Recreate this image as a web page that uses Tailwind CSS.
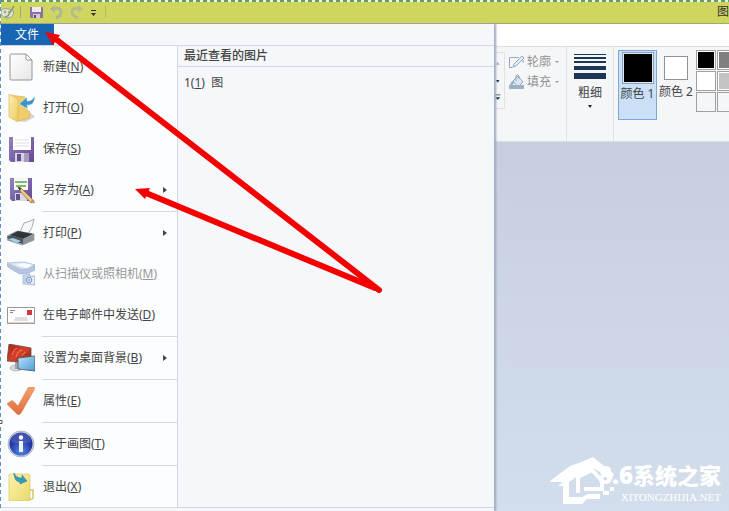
<!DOCTYPE html>
<html lang="zh-CN">
<head>
    <meta charset="UTF-8">
    <meta name="viewport" content="width=device-width, initial-scale=1.0">
    <title>画图</title>
    <script src="https://cdn.jsdelivr.net/npm/@tailwindcss/browser@4"></script>
</head>
<body class="font-['Noto_Sans','Noto_Sans_CJK_SC',sans-serif] text-xs text-[#444]">

    <div class="relative flex min-h-screen flex-col overflow-hidden bg-[#f5f7fa]">

        <!-- Title bar -->
        <header class="flex h-6 items-center border-b border-[#a5a86c] bg-[#cfd65f]">
            <svg class="h-4 w-4" viewBox="0 0 16 16" fill="none">
                <path d="M1 8C1 5 5 4 9 5l4 2c2 2-1 7-5 7-5 0-7-3-7-6z" fill="#dfe4ca" stroke="#96a18b"/>
                <circle cx="5" cy="8" r="1.2" fill="#7fa4ae"/>
                <circle cx="9" cy="8" r="1.2" fill="#b7a184"/>
                <path d="M14 2L8 12l-3 1" stroke="#8d987f" stroke-width="1.5"/>
            </svg>
            <span class="ml-1 h-3 w-px bg-[#a5a96a]"></span>
            <button class="ml-2" aria-label="保存">
                <svg class="h-4 w-4" viewBox="0 0 16 16">
                    <path d="M1 3h13v11H2l-1-1z" fill="#8a74a0"/>
                    <path d="M3 3h9v5H3z" fill="#f1e9f4"/>
                    <path d="M4 10h7v4H4z" fill="#d3c9df"/>
                    <path d="M5 11h2v3H5z" fill="#594774"/>
                </svg>
            </button>
            <button class="ml-1" aria-label="撤消">
                <svg class="h-4 w-4" viewBox="0 0 16 16" fill="none">
                    <path d="M4 5c5-2 8 0 8 3 0 3-2 5-5 6" stroke="#b0b597" stroke-width="3"/>
                    <path d="M6 1v8L1 5z" fill="#b0b597"/>
                </svg>
            </button>
            <button class="ml-1" aria-label="重做">
                <svg class="h-4 w-4" viewBox="0 0 16 16" fill="none">
                    <path d="M11 5C6 3 3 5 3 8c0 3 3 5 6 6" stroke="#b6bc8c" stroke-width="3"/>
                    <path d="M9 1v8l5-4z" fill="#b6bc8c"/>
                </svg>
            </button>
            <button aria-label="自定义快速访问工具栏">
                <svg class="h-4 w-4" viewBox="0 0 16 16" fill="#333">
                    <path d="M6 6h5v1H6zM6 9h5l-2.500 3z"/>
                </svg>
            </button>
            <span class="ml-1 h-3 w-px bg-[#b5b96c]"></span>
            <h1 class="ml-auto text-xs whitespace-nowrap text-[#333]">图</h1>
        </header>

        <div class="flex grow">

            <!-- File menu -->
            <div class="z-10 flex w-[495px] shrink-0 flex-col border-r border-[#aab2c8] bg-[#f5f7fa] shadow-[1px_0_2px_#9aa3bd]">
                <div class="flex h-[21px] items-stretch">
                    <button class="w-[54px] bg-[#1765b3] text-white">文件</button>
                </div>
                <div class="flex border-y border-[#d5d8e0]">
                    <nav class="flex w-[178px] shrink-0 flex-col border-r border-[#d5d8e0] bg-[#fbfdfe]">
                        <button class="flex h-[41px] items-center pl-[7px]">
                            <svg class="mr-2 h-7 w-7" viewBox="0 0 28 28">
                                <defs>
                                    <linearGradient id="paper" x2="1" y2="1"><stop stop-color="#fff"/><stop offset="1" stop-color="#e6e6e6"/></linearGradient>
                                    <linearGradient id="folder" x2="1" y2="1"><stop stop-color="#fcf0b2"/><stop offset="1" stop-color="#edca62"/></linearGradient>
                                    <linearGradient id="note" x2="1" y2="1"><stop stop-color="#fcf3ae"/><stop offset="1" stop-color="#ecd869"/></linearGradient>
                                    <linearGradient id="disk" x2="1" y2="1"><stop stop-color="#9183bd"/><stop offset="1" stop-color="#67479b"/></linearGradient>
                                    <radialGradient id="info" cy=".8"><stop stop-color="#568ce6"/><stop offset="1" stop-color="#2036a2"/></radialGradient>
                                    <linearGradient id="check" x2="0" y2="1"><stop stop-color="#f3a06c"/><stop offset="1" stop-color="#e36c3e"/></linearGradient>
                                    <linearGradient id="screen" x2="1" y2="1"><stop stop-color="#bfe1f8"/><stop offset="1" stop-color="#489bd7"/></linearGradient>
                                    <linearGradient id="wallpaper" x2="1" y2="1"><stop stop-color="#9d2418"/><stop offset=".5" stop-color="#d8402a"/><stop offset="1" stop-color="#8a1f14"/></linearGradient>
                                </defs>
                                <path d="M4 1h15l6 6v19q0 1-1 1H4q-1 0-1-1V2q0-1 1-1z" fill="url(#paper)" stroke="#969696"/>
                                <path d="M19 1v5q0 1 1 1h5z" fill="#fff" stroke="#969696"/>
                            </svg>
                            <span>新建(<u>N</u>)</span>
                        </button>
                        <button class="flex h-[41px] items-center pl-[7px]">
                            <svg class="mr-2 h-7 w-7" viewBox="0 0 28 28">
                                <path d="M10 27l14-8 4 4-10 5z" fill="#d4d4d0"/>
                                <path d="M3 1l15 2v11l5 4-1 6-11 3z" fill="#f0cd66" stroke="#d9b356" stroke-width=".7"/>
                                <path d="M2 0l9 5v23l-9-5z" fill="url(#folder)" stroke="#dbb75c" stroke-width=".7"/>
                                <path d="M28 2c0 7-4 10-8 9l1 4-9-5 8-7v4c4 0 6-2 8-5z" fill="#3b94cd" stroke="#fff" stroke-width=".5"/>
                            </svg>
                            <span>打开(<u>O</u>)</span>
                        </button>
                        <button class="flex h-[41px] items-center pl-[7px]">
                            <svg class="mr-2 h-7 w-7" viewBox="0 0 28 28">
                                <path d="M2 2h24q1 0 1 1v24H4l-2-2z" fill="url(#disk)"/>
                                <path d="M6 1h18v14H6z" fill="#fff"/>
                                <path d="M8 5h14M8 8h14M8 11h14" stroke="#dedee7"/>
                                <path d="M8 18h14v9H8z" fill="#d5d3dd"/>
                                <path d="M10 19h4v7h-4z" fill="#674c93"/>
                                <path d="M17 18h5v9h-5z" fill="#a79cbe"/>
                            </svg>
                            <span>保存(<u>S</u>)</span>
                        </button>
                        <button class="flex h-[41px] items-center pl-[7px]">
                            <svg class="mr-2 h-7 w-7" viewBox="0 0 28 28">
                                <path d="M3 2h22v23H5l-2-2z" fill="url(#disk)"/>
                                <path d="M7 2h14v12H7z" fill="#f5f8f3"/>
                                <path d="M8 6h12M9 10h10" stroke="#7fbb72" stroke-width="2"/>
                                <path d="M8 17h12v8H8z" fill="#dad8e2"/>
                                <path d="M9 18h4v6H9z" fill="#63508d"/>
                                <path d="M11 11l3 1 13 13-3 2-11-12z" fill="#edc882" stroke="#8f713e" stroke-width=".8"/>
                                <path d="M11 11l3 1-1 3z" fill="#333"/>
                                <path d="M25 23l3 3q0 2-3 1l-1-2z" fill="#ce8d66"/>
                            </svg>
                            <span class="grow text-left">另存为(<u>A</u>)</span>
                            <svg class="mr-2.5 h-2 w-1" viewBox="0 0 4 8"><path d="M0 1v6l4-3z" fill="#444"/></svg>
                        </button>
                        <div class="mt-px ml-[42px] h-px bg-[#d5d8e0]"></div>
                        <button class="flex h-[41px] items-center pl-[7px]">
                            <svg class="mr-2 h-7 w-7" viewBox="0 0 28 28">
                                <path d="M13 13l4-9q5-1 10-4-1 9-6 15z" fill="#f7f8fb" stroke="#93969d" stroke-width=".8"/>
                                <path d="M0 17l10-5 17 3v6l-12 5-15-5z" fill="#b8bdc4" stroke="#777c83" stroke-width=".6"/>
                                <path d="M3 16l8-4 15 3-10 5z" fill="#32363c"/>
                                <path d="M0 18l4-2 12 4v5l-14-4z" fill="#4e5359"/>
                                <path d="M1 20l5-1 8 3-4 2z" fill="#9dd0e7"/>
                                <path d="M16 20l11-5v6l-11 5z" fill="#8e949b"/>
                            </svg>
                            <span class="grow text-left">打印(<u>P</u>)</span>
                            <svg class="mr-2.5 h-2 w-1" viewBox="0 0 4 8"><path d="M0 1v6l4-3z" fill="#444"/></svg>
                        </button>
                        <button class="flex h-[41px] items-center pl-[7px] text-[#999]" disabled>
                            <svg class="mr-2 h-7 w-7" viewBox="0 0 28 28">
                                <path d="M0 3q10-1 17-1l11 3-6 5q-6 0-8-1Z" fill="#dce5f3" stroke="#a3b6d6" stroke-width=".7"/>
                                <path d="M0 4l14 6q8 0 14-5v5q-6 4-15 4Q7 11 1 7z" fill="#b6c6e1" stroke="#9bafd2" stroke-width=".7"/>
                                <path d="M8 5l9-2 8 2-5 3z" fill="#f8fbff"/>
                                <path d="M16 15h3v-1h4v2h5v9l-12-1z" fill="#c3d1e8" stroke="#a2b4d5" stroke-width=".7"/>
                                <path d="M19 17h8v7l-8-1z" fill="#e5edf8"/>
                                <circle cx="22" cy="20" r="2.800" fill="#d5e0f1" stroke="#7f96c2"/>
                                <circle cx="22" cy="20" r="1" fill="#91a7cf"/>
                            </svg>
                            <span>从扫描仪或照相机(<u>M</u>)</span>
                        </button>
                        <button class="flex h-[41px] items-center pl-[7px]">
                            <svg class="mr-2 h-7 w-7" viewBox="0 0 28 28">
                                <path d="M.5 6.500h27v16H.5z" fill="#fff" stroke="#96989d"/>
                                <path d="M1 22h26" stroke="#bd9c89"/>
                                <path d="M3 9.500h5M3 11.500h3" stroke="#888"/>
                                <path d="M20 9h5v5h-5z" fill="#d23a3a"/>
                                <path d="M8 17h12M7 19h14" stroke="#bcbcc5"/>
                            </svg>
                            <span>在电子邮件中发送(<u>D</u>)</span>
                        </button>
                        <div class="mt-px ml-[42px] h-px bg-[#d5d8e0]"></div>
                        <button class="flex h-[41px] items-center pl-[7px]">
                            <svg class="mr-2 h-7 w-7" viewBox="0 0 28 28">
                                <ellipse cx="9" cy="24" rx="6" ry="3" fill="#d4d7db" stroke="#989ca2" stroke-width=".6"/>
                                <path d="M8 18h5l-1 7H8z" fill="#a5a9ae"/>
                                <path d="M2 0l22 4v15L0 17z" fill="url(#wallpaper)" stroke="#6c4a43" stroke-width=".8"/>
                                <path d="M5 11q2-6 5-7M9 13q2-7 6-7M15 12q1-3 4-4" stroke="#ef8355" fill="none"/>
                                <path d="M11 14l17-2v15l-17-2z" fill="url(#screen)" stroke="#45545f" stroke-width=".8"/>
                            </svg>
                            <span class="grow text-left">设置为桌面背景(<u>B</u>)</span>
                            <svg class="mr-2.5 h-2 w-1" viewBox="0 0 4 8"><path d="M0 1v6l4-3z" fill="#444"/></svg>
                        </button>
                        <div class="mt-px ml-[42px] h-px bg-[#d5d8e0]"></div>
                        <button class="flex h-[41px] items-center pl-[7px]">
                            <svg class="mr-2 h-7 w-7" viewBox="0 0 28 28">
                                <path d="M0 17l4-3q2-1 3 1l4 4L21 1q1-1 3-1h3q1 1 0 3L14 26q-2 3-4 1z" fill="url(#check)" stroke="#d97a50" stroke-width=".6"/>
                            </svg>
                            <span>属性(<u>E</u>)</span>
                        </button>
                        <div class="mt-px ml-[42px] h-px bg-[#d5d8e0]"></div>
                        <button class="flex h-[41px] items-center pl-[7px]">
                            <svg class="mr-2 h-7 w-7" viewBox="0 0 28 28">
                                <circle cx="14" cy="14" r="13" fill="#cad1df" stroke="#8c96b0" stroke-width=".6"/>
                                <circle cx="14" cy="14" r="11.500" fill="url(#info)"/>
                                <path d="M4 12a10 10 0 0 1 20 0q-10 3-20 0z" fill="#fff" opacity=".15"/>
                                <circle cx="14" cy="7.500" r="2.200" fill="#fff"/>
                                <path d="M12 11h4v11h-4z" fill="#eef2fc"/>
                            </svg>
                            <span>关于画图(<u>T</u>)</span>
                        </button>
                        <div class="mt-px ml-[42px] h-px bg-[#d5d8e0]"></div>
                        <button class="flex h-[41px] items-center pl-[7px]">
                            <svg class="mr-2 h-7 w-7" viewBox="0 0 28 28">
                                <path d="M2 2l2-1h18l1 1v25l-1 1H2z" fill="url(#note)" stroke="#d8c462" stroke-width=".7"/>
                                <path d="M23 17h3v8q-1 2-3 1" fill="none" stroke="#d8c462" stroke-width="1.500"/>
                                <path d="M7 0c1 3 4 5 8 5V2l5 6-7 3V9C9 9 7 5 7 0z" fill="#339abb" stroke="#277992" stroke-width=".5"/>
                            </svg>
                            <span>退出(<u>X</u>)</span>
                        </button>
                    </nav>
                    <section class="flex grow flex-col">
                        <h2 class="flex h-[21px] items-center border-b border-[#d5d8e0] pl-1.5 font-medium">最近查看的图片</h2>
                        <a href="#" class="mt-2 pl-1.5">1(<u>1</u>)&nbsp; 图</a>
                    </section>
                </div>
            </div>

            <!-- Ribbon and canvas -->
            <div class="flex min-w-0 grow flex-col">
                <div class="h-[22px] shrink-0 bg-white"></div>
                <div class="flex h-[96px] shrink-0 overflow-hidden border-y border-[#dcdee2] bg-[#f5f6f7]">
                    <div class="flex w-[72px] shrink-0 items-start border-r border-[#e0e2e5] pt-[5px]">
                        <svg class="h-[57px] w-2.5 shrink-0 border border-l-0 border-[#dfe2e8]" viewBox="0 0 10 57" fill="#1e3250">
                            <path d="M1 11h4L3 8z" fill="#a0a6b0"/>
                            <path d="M1 28h4l-2 3zM0 44h6v1H0zM0 47h6l-3 3z"/>
                        </svg>
                        <div class="ml-1 flex flex-col text-[#929292]">
                            <button class="flex h-5 items-center whitespace-nowrap" disabled>
                                <svg class="mr-0.5 h-4 w-4" viewBox="0 0 16 16" fill="none" stroke="#91a9c4">
                                    <path d="M10 3.500H.5v10h3M14 6v3"/>
                                    <path d="M5 10l8-8 2 2-8 8-3 1z" fill="#e3edf5"/>
                                </svg>
                                轮廓
                                <svg class="ml-1 h-1 w-1" viewBox="0 0 4 4"><path d="M0 1h4L2 3z" fill="#999"/></svg>
                            </button>
                            <button class="flex h-5 items-center whitespace-nowrap" disabled>
                                <svg class="mr-0.5 h-4 w-4" viewBox="0 0 16 16">
                                    <path d="M4 7l5-5 5 6-5 5z" fill="#dbe8f2" stroke="#8da5bf"/>
                                    <path d="M4 7q-3 1-3 6 3-1 4-5z" fill="#8eabc7"/>
                                    <path d="M7 7V2q1-3 3 0v3" fill="none" stroke="#8da5bf"/>
                                    <path d="M0 11h15v4H0z" fill="#9db1c6"/>
                                </svg>
                                填充
                                <svg class="ml-1 h-1 w-1" viewBox="0 0 4 4"><path d="M0 1h4L2 3z" fill="#999"/></svg>
                            </button>
                        </div>
                    </div>
                    <button class="flex w-[47px] shrink-0 flex-col items-center border-r border-[#e0e2e5] pt-1.5">
                        <svg class="h-7 w-8" viewBox="0 0 32 28" fill="#1e3656">
                            <path d="M0 1h32v1H0zM0 4h32v2H0zM0 8h32v2H0zM0 13h32v4H0zM0 20h32v6H0z"/>
                        </svg>
                        <span class="mt-1">粗细</span>
                        <svg class="mt-1 h-1 w-1" viewBox="0 0 4 4"><path d="M0 0h4L2 3z" fill="#222"/></svg>
                    </button>
                    <div class="flex shrink-0 items-start pt-[3px] pl-1">
                        <button class="flex h-[70px] w-[39px] flex-col items-center border border-[#7fa9d4] bg-[#c9e0f7] pt-px whitespace-nowrap">
                            <span class="h-8 w-8 border-2 border-[#8fa3b8] bg-black outline-1 -outline-offset-2 outline-[#dbe7f2]"></span>
                            <span class="mt-0.5">颜色 1</span>
                        </button>
                        <button class="flex h-[70px] w-[38px] flex-col items-center pt-1.5 whitespace-nowrap">
                            <span class="h-6 w-6 border border-[#909498] bg-white"></span>
                            <span class="mt-1">颜色 2</span>
                        </button>
                        <div class="ml-px grid grid-cols-2 gap-x-px gap-y-px">
                            <button class="h-5 w-5 border border-[#a0a0a0] bg-black inset-ring inset-ring-white" aria-label="黑色"></button>
                            <button class="h-5 w-5 border border-[#a0a0a0] bg-[#7f7f7f] inset-ring inset-ring-white" aria-label="灰色-50%"></button>
                            <button class="h-5 w-5 border border-[#a0a0a0] bg-white" aria-label="白色"></button>
                            <button class="h-5 w-5 border border-[#a0a0a0] bg-[#c3c3c3] inset-ring inset-ring-white" aria-label="灰色-25%"></button>
                            <button class="h-5 w-5 border border-[#a0a0a0] bg-[#f5f6f7]" aria-label="自定义颜色 1"></button>
                            <button class="h-5 w-5 border border-[#a0a0a0] bg-[#f5f6f7]" aria-label="自定义颜色 2"></button>
                        </div>
                    </div>
                </div>
                <main class="flex grow flex-col items-end justify-end bg-linear-to-b from-[#c6cfe0] to-[#d3deec] pr-2 pb-1.5">
                    <!-- Site logo -->
                    <div class="flex items-end text-white">
                        <svg class="h-12 w-16" viewBox="0 0 64 48" fill="none" stroke="#fff" stroke-width="5">
                            <path d="M0 24L20 9l9-3 14-6 21 17-2 5-19-11-15 8-9 6v15h13l6-3h12v5H37l-5 5H13V29H8l5-4H0z" fill="#fff" stroke="none"/>
                            <path d="M28 36V20l14-7 10 11v8H34" stroke-width="4"/>
                            <path d="M53 36h6M60 32h4" stroke-width="4"/>
                        </svg>
                        <div class="-ml-4 flex flex-col items-end">
                            <div class="flex items-center text-[22px]/7 font-black whitespace-nowrap">
                                <span class="text-2xl/7">8.6</span>
                                <span>系统之家</span>
                            </div>
                            <span class="font-['Liberation_Serif',serif] text-[11px]/4">XITONGZHIJIA.NET</span>
                        </div>
                    </div>
                </main>
            </div>
        </div>

        <!-- Selection marquee and pointer arrows -->
        <svg class="pointer-events-none absolute inset-0 z-20 h-full w-full">
            <path d="M0 1h3000" stroke="#eef5d8" stroke-width="2"/>
            <path d="M0 1h3000" stroke="#5f9c6c" stroke-width="2" stroke-dasharray="4 3"/>
            <path d="M.5 0v3000" stroke="#fff"/>
            <path d="M.5 0v3000" stroke="#5b93c4" stroke-dasharray="4 3"/>
            <path d="M379 290L57 40M375 288L146 193" stroke="#f40000" stroke-width="6" stroke-linecap="round"/>
            <path d="M45 32l15 3-7 10zM135 189l15-1-5 11z" fill="#f40000"/>
            <path d="M-1 420.500h3v3h-3z" fill="#fff" stroke="#555"/>
        </svg>
    </div>

</body>
</html>
